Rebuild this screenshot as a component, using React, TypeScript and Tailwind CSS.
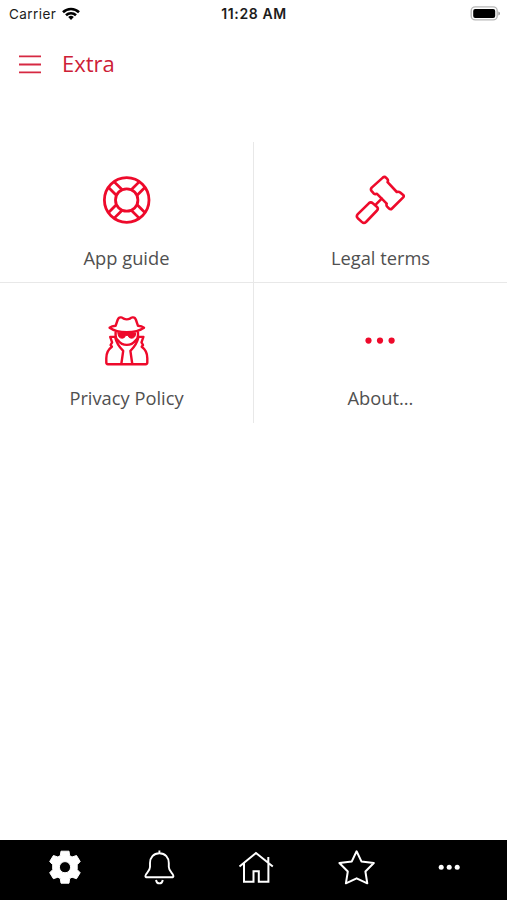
import type { ReactNode } from "react";

function StatusBar() {
  return (
    <header className="grid h-7 shrink-0 grid-cols-[1fr_80px_1fr] items-center pl-[9px] pr-[7px] font-['Inter','Liberation_Sans',sans-serif] leading-7 text-[#1c1c1c]">
      <div className="flex items-center gap-[6px]">
        <span className="w-[47px] whitespace-nowrap text-[13.5px] tracking-[0.45px]">Carrier</span>
        <svg className="h-[14px] w-[18px]" viewBox="0 0 18 14" fill="none" stroke="#000" strokeWidth="2.6">
          <path d="M1 5.2a11.5 11.5 0 0 1 16 0" />
          <path d="M4 8.2a7.2 7.2 0 0 1 10 0" />
          <path d="M9 12.9 6.2 10.1a4 4 0 0 1 5.6 0z" fill="#000" stroke="none" />
        </svg>
      </div>
      <span className="whitespace-nowrap pr-px text-center text-[14px] font-semibold tracking-[0.6px]">11:28 AM</span>
      <svg className="h-4 w-[30px] justify-self-end" viewBox="470 6 30 16">
        <rect x="471.2" y="6.9" width="26" height="13" rx="4" fill="#fff" stroke="#b8b8b8" strokeWidth="1.4" />
        <rect x="473.2" y="8.9" width="22" height="9" rx="2" fill="#000" />
        <path d="M498.4 11.4v4q1.6-.6 1.6-2t-1.6-2z" fill="#999" />
      </svg>
    </header>
  );
}

function LifeRing() {
  return (
    <svg className="h-[51px] w-[51px]" viewBox="-25.7 -25 51 51" fill="none" stroke="#ee0a2b" strokeWidth="2.8">
      <circle r="22.3" />
      <circle r="11.2" />
      <g transform="rotate(45)">
        <path d="M10.4-4H22M10.4 4H22M-10.4-4H-22M-10.4 4H-22M-4 10.4V22M4 10.4V22M-4-10.4V-22M4-10.4V-22" />
      </g>
    </svg>
  );
}

function Gavel() {
  return (
    <svg className="h-[51px] w-[51px]" viewBox="355 175 51 51" fill="none" stroke="#ee0a2b" strokeWidth="2.6" strokeLinejoin="round" strokeLinecap="round">
      <path d="M371.7 187.6 382.8 177.6q1.8-1.4 3.4.2l1 1.1q1.3 1.4.4 3.2l9.2 9.9q1.9-.8 3.4.5l3 2.5q1.2 1.2 0 2.4L392 208.5q-1.4 1.4-2.9.1l-1.9-1.9q-1.2-1.4-.5-3.1L377 193.8q-1.9.8-3.3-.4l-2-2.2q-1.5-1.8 0-3.6z" />
      <path d="M381.7 198.7 376.2 204.2" />
      <path d="M368.8 203.3q2-1.8 4 0l4 3.4q2 1.8.2 3.8L366 222q-2 1.9-4 .1l-4.2-3.9q-1.9-2 0-4z" />
    </svg>
  );
}

function Spy() {
  return (
    <svg className="h-[51px] w-[51px]" viewBox="101 315 51 51" fill="none" stroke="#ee0a2b" strokeWidth="2.4" strokeLinejoin="round" strokeLinecap="round">
      <path d="M115.6 325.8 117.6 320q1-3 3.4-2.6 1.5.3 2.6 1.3 3.2 1.4 6.4 0 1.1-1 2.6-1.3 2.4-.4 3.4 2.6l2 5.8q3.8.3 6 2-6.2 4.4-17.2 4.4t-17.2-4.4q2.2-1.7 6-2z" />
      <path d="M115.6 332.5v2.8q0 3.4 2.5 5.2 3.3 4.4 8.7 4.4t8.7-4.4q2.5-1.8 2.5-5.2v-2.8" />
      <path d="M118 332.8h17.6q.2 5.4-4.2 5.4-2.5 0-3.5-2.8h-2.2q-1 2.8-3.5 2.8-4.4 0-4.2-5.4z" fill="#ee0a2b" strokeWidth="1" />
      <path d="M115.2 336.9h-5l1.9 5.5-1.5 2.6 1.3 1.8q-5.6 4-5.6 11.4v4.4q0 1.6 1.6 1.6h37.8q1.6 0 1.6-1.6v-4.4q0-7.4-5.6-11.4l1.3-1.8-1.5-2.6 1.9-5.5h-5" />
      <path d="M115.2 337.3q1.6 7.5 8 13.5L121.4 363.5M138.4 337.3q-1.6 7.5-8 13.5L132.2 363.5" />
    </svg>
  );
}

function RedDots() {
  return (
    <svg className="h-[51px] w-[51px]" viewBox="355 315 51 51" fill="#ee0a2b">
      <circle cx="368.5" cy="340.6" r="3.1" />
      <circle cx="380" cy="340.6" r="3.1" />
      <circle cx="391.6" cy="340.6" r="3.1" />
    </svg>
  );
}

function Tile({ icon, label, className }: { icon: ReactNode; label: string; className: string }) {
  return (
    <button className={`flex flex-col items-center border-[#e8e8e8] ${className}`}>
      {icon}
      <span className="mt-[18px] text-[18.3px] leading-7 text-[#505050]">{label}</span>
    </button>
  );
}

function TabBar() {
  return (
    <nav className="flex h-[60px] shrink-0 items-start bg-black pt-[7px]">
      <svg className="ml-[45px] h-10 w-10" viewBox="45 847 40 40">
        <path fill="#fff" fillRule="evenodd" stroke="#fff" strokeWidth="1" strokeLinejoin="round" d="M61 851.2h8l.6 4.4 2.4 1.4 4.5-1.5 3.7 6-3 3.2v5l3 3-3.7 6-4.5-1.5-2.4 1.4-.6 4.6h-8l-.7-4.6-2.4-1.4-4.5 1.5-3.7-6 3-3v-5l-3-3.2 3.7-6 4.5 1.5 2.4-1.4zM65 861.6a5.6 5.6 0 1 0 0 11.2 5.6 5.6 0 0 0 0-11.2z" />
      </svg>
      <svg className="ml-[54px] h-10 w-10" viewBox="139 847 40 40" fill="none" stroke="#fff" strokeWidth="1.9" strokeLinejoin="round">
        <path d="M159.4 850.5v2.5M159.4 853.3c-6 0-9.4 4.3-9.4 9.8v4c0 4.4-4.6 6.5-4.6 8.8 0 1 .7 1.4 1.7 1.4h24.6c1 0 1.7-.4 1.7-1.4 0-2.3-4.6-4.4-4.6-8.8v-4c0-5.5-3.4-9.8-9.4-9.8z" />
        <path d="M156 880q.6 3.4 3.4 3.4t3.4-3.4" />
      </svg>
      <svg className="ml-[57px] h-10 w-10" viewBox="236 847 40 40" fill="none" stroke="#fff" strokeWidth="2">
        <path d="M239.5 866.5 256 853l16.8 13.5M244 863.5v18.3h9.5v-10.5h5.3v10.5h9.6v-18.3M268.3 863v-6" />
      </svg>
      <svg className="ml-[61px] h-10 w-10" viewBox="337 847 40 40" fill="none" stroke="#fff" strokeWidth="2" strokeLinejoin="round">
        <path d="M356.6 851.3 361.4 861.4 373.8 863 365.4 871.5 367.3 883.3 356.6 878.3 345.9 883.3 347.8 871.5 339.4 863 351.8 861.4z" />
      </svg>
      <svg className="ml-[52px] h-10 w-10" viewBox="429 847 40 40" fill="#fff">
        <circle cx="441.2" cy="867.3" r="2.5" />
        <circle cx="449.2" cy="867.3" r="2.5" />
        <circle cx="457.2" cy="867.3" r="2.5" />
      </svg>
    </nav>
  );
}

export default function App() {
  return (
    <div className="flex h-[900px] w-[507px] flex-col bg-white font-['Open_Sans','Noto_Sans',sans-serif]">
      <StatusBar />
      <div className="flex h-[72px] shrink-0 items-center pl-[19px] text-[#cd2036]">
        <svg className="h-5 w-[22px]" viewBox="0 0 22 20" stroke="#d62942" strokeWidth="1.9">
          <path d="M0 2.4h22M0 10.5h22M0 18.4h22" />
        </svg>
        <h1 className="ml-[21px] pb-[2px] text-[22px] leading-8">Extra</h1>
      </div>
      <main className="grid flex-1 grid-cols-[254px_253px] grid-rows-[141px_140px] pt-[42px]">
        <Tile icon={<LifeRing />} label="App guide" className="border-r border-b pt-[33px]" />
        <Tile icon={<Gavel />} label="Legal terms" className="border-b pt-[33px]" />
        <Tile icon={<Spy />} label="Privacy Policy" className="border-r pt-8" />
        <Tile icon={<RedDots />} label="About..." className="pt-8" />
      </main>
      <TabBar />
    </div>
  );
}
